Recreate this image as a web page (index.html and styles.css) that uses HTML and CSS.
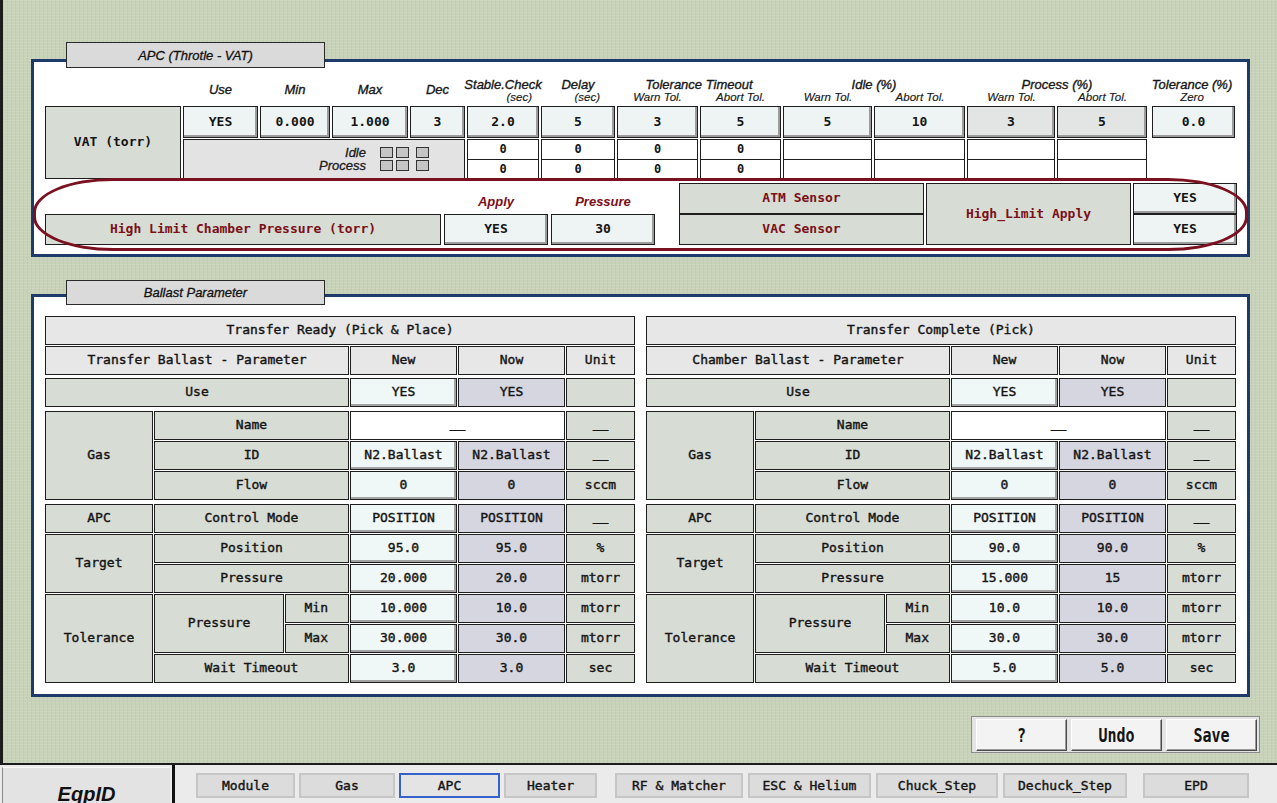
FILE: index.html
```html
<!DOCTYPE html>
<html>
<head>
<meta charset="utf-8">
<title>APC</title>
<link rel="stylesheet" href="styles.css">
</head>
<body>
<div class="main">
  <section class="panel panel-apc">
    <div class="tab">APC (Throtle - VAT)</div>
    <div class="apc-grid">
      <div class="hd"></div>
      <div class="hd single"><span class="hm">Use</span></div>
      <div class="hd single"><span class="hm">Min</span></div>
      <div class="hd single"><span class="hm">Max</span></div>
      <div class="hd single"><span class="hm">Dec</span></div>
      <div class="hd"><span class="hm">Stable.Check</span><span class="hs sec1">(sec)</span></div>
      <div class="hd"><span class="hm">Delay</span><span class="hs sec2">(sec)</span></div>
      <div class="hd span2"><span class="hm">Tolerance Timeout</span><div class="hs2"><span class="hs">Warn Tol.</span><span class="hs">Abort Tol.</span></div></div>
      <div class="hd span2"><span class="hm">Idle (%)</span><div class="hs2"><span class="hs">Warn Tol.</span><span class="hs">Abort Tol.</span></div></div>
      <div class="hd span2"><span class="hm">Process (%)</span><div class="hs2"><span class="hs">Warn Tol.</span><span class="hs">Abort Tol.</span></div></div>
      <div class="hd"><span class="hm">Tolerance (%)</span><span class="hs">Zero</span></div>

      <div class="lbl vat">VAT (torr)</div>
      <div class="val">YES</div>
      <div class="val">0.000</div>
      <div class="val">1.000</div>
      <div class="val">3</div>
      <div class="val">2.0</div>
      <div class="val">5</div>
      <div class="val">3</div>
      <div class="val">5</div>
      <div class="val">5</div>
      <div class="val">10</div>
      <div class="val proc">3</div>
      <div class="val proc">5</div>
      <div class="val zero">0.0</div>

      <div class="idlebox">
        <div class="idletext"><span>Idle</span><span>Process</span></div>
        <div class="squares">
          <div class="sqrow"><i class="sq"></i><i class="sq"></i><i class="sq far"></i></div>
          <div class="sqrow"><i class="sq"></i><i class="sq"></i><i class="sq far"></i></div>
        </div>
      </div>
      <div class="stack"><div>0</div><div>0</div></div>
      <div class="stack"><div>0</div><div>0</div></div>
      <div class="stack"><div>0</div><div>0</div></div>
      <div class="stack"><div>0</div><div>0</div></div>
      <div class="stack"><div></div><div></div></div>
      <div class="stack"><div></div><div></div></div>
      <div class="stack"><div></div><div></div></div>
      <div class="stack"><div></div><div></div></div>
    </div>

    <div class="hl-row">
      <div class="hl-left">
        <div></div>
        <div class="hl-cap">Apply</div>
        <div class="hl-cap">Pressure</div>
        <div class="lbl red">High Limit Chamber Pressure (torr)</div>
        <div class="val">YES</div>
        <div class="val">30</div>
      </div>
      <div class="hl-right">
        <div class="lbl red atm">ATM Sensor</div>
        <div class="lbl red vac">VAC Sensor</div>
        <div class="lbl red hla">High_Limit Apply</div>
        <div class="val y1">YES</div>
        <div class="val y2">YES</div>
      </div>
    </div>
    <div class="ring"></div>
  </section>

  <section class="panel panel-ballast">
    <div class="tab">Ballast Parameter</div>

    <div class="btable">
      <div class="bgrp">
        <div class="c h s6">Transfer Ready (Pick &amp; Place)</div>
        <div class="c h s3">Transfer Ballast - Parameter</div>
        <div class="c h">New</div>
        <div class="c h">Now</div>
        <div class="c h">Unit</div>
      </div>
      <div class="bgrp g2">
        <div class="c s3">Use</div>
        <div class="c new">YES</div>
        <div class="c now">YES</div>
        <div class="c"></div>
      </div>
      <div class="bgrp g3">
        <div class="c r3">Gas</div>
        <div class="c s2">Name</div>
        <div class="c wht s2 us">__</div>
        <div class="c us">__</div>
        <div class="c s2">ID</div>
        <div class="c new">N2.Ballast</div>
        <div class="c now">N2.Ballast</div>
        <div class="c us">__</div>
        <div class="c s2">Flow</div>
        <div class="c new">0</div>
        <div class="c now">0</div>
        <div class="c">sccm</div>
      </div>
      <div class="bgrp g4">
        <div class="c">APC</div>
        <div class="c s2">Control Mode</div>
        <div class="c new">POSITION</div>
        <div class="c now">POSITION</div>
        <div class="c us">__</div>
        <div class="c r2">Target</div>
        <div class="c s2">Position</div>
        <div class="c new">95.0</div>
        <div class="c now">95.0</div>
        <div class="c">%</div>
        <div class="c s2">Pressure</div>
        <div class="c new">20.000</div>
        <div class="c now">20.0</div>
        <div class="c">mtorr</div>
        <div class="c r3">Tolerance</div>
        <div class="c r2">Pressure</div>
        <div class="c mm">Min</div>
        <div class="c new">10.000</div>
        <div class="c now">10.0</div>
        <div class="c">mtorr</div>
        <div class="c mm">Max</div>
        <div class="c new">30.000</div>
        <div class="c now">30.0</div>
        <div class="c">mtorr</div>
        <div class="c s2">Wait Timeout</div>
        <div class="c new">3.0</div>
        <div class="c now">3.0</div>
        <div class="c">sec</div>
      </div>
    </div>

    <div class="btable">
      <div class="bgrp">
        <div class="c h s6">Transfer Complete (Pick)</div>
        <div class="c h s3">Chamber Ballast - Parameter</div>
        <div class="c h">New</div>
        <div class="c h">Now</div>
        <div class="c h">Unit</div>
      </div>
      <div class="bgrp g2">
        <div class="c s3">Use</div>
        <div class="c new">YES</div>
        <div class="c now">YES</div>
        <div class="c"></div>
      </div>
      <div class="bgrp g3">
        <div class="c r3">Gas</div>
        <div class="c s2">Name</div>
        <div class="c wht s2 us">__</div>
        <div class="c us">__</div>
        <div class="c s2">ID</div>
        <div class="c new">N2.Ballast</div>
        <div class="c now">N2.Ballast</div>
        <div class="c us">__</div>
        <div class="c s2">Flow</div>
        <div class="c new">0</div>
        <div class="c now">0</div>
        <div class="c">sccm</div>
      </div>
      <div class="bgrp g4">
        <div class="c">APC</div>
        <div class="c s2">Control Mode</div>
        <div class="c new">POSITION</div>
        <div class="c now">POSITION</div>
        <div class="c us">__</div>
        <div class="c r2">Target</div>
        <div class="c s2">Position</div>
        <div class="c new">90.0</div>
        <div class="c now">90.0</div>
        <div class="c">%</div>
        <div class="c s2">Pressure</div>
        <div class="c new">15.000</div>
        <div class="c now">15</div>
        <div class="c">mtorr</div>
        <div class="c r3">Tolerance</div>
        <div class="c r2">Pressure</div>
        <div class="c mm">Min</div>
        <div class="c new">10.0</div>
        <div class="c now">10.0</div>
        <div class="c">mtorr</div>
        <div class="c mm">Max</div>
        <div class="c new">30.0</div>
        <div class="c now">30.0</div>
        <div class="c">mtorr</div>
        <div class="c s2">Wait Timeout</div>
        <div class="c new">5.0</div>
        <div class="c now">5.0</div>
        <div class="c">sec</div>
      </div>
    </div>
  </section>

  <div class="actions">
    <button class="abtn"><span>?</span></button>
    <button class="abtn"><span>Undo</span></button>
    <button class="abtn"><span>Save</span></button>
  </div>
</div>

<nav class="navbar">
  <div class="eqp">EqpID</div>
  <div class="sep"></div>
  <div class="tabs">
    <div class="nb w-module">Module</div>
    <div class="nb w-gas">Gas</div>
    <div class="nb on w-apc">APC</div>
    <div class="nb w-heater">Heater</div>
    <div class="nb w-rf">RF &amp; Matcher</div>
    <div class="nb w-esc">ESC &amp; Helium</div>
    <div class="nb w-chuck">Chuck_Step</div>
    <div class="nb w-dechuck">Dechuck_Step</div>
    <div class="nb w-epd">EPD</div>
  </div>
</nav>
</body>
</html>
```

FILE: styles.css
```css
* { box-sizing: border-box; }
html, body { margin: 0; padding: 0; }
body {
  width: 1277px;
  height: 803px;
  overflow: hidden;
  font-family: "DejaVu Sans Mono", "Liberation Mono", monospace;
  font-size: 13px;
  color: #141414;
  background: #ebebeb;
}

.main {
  height: 765px;
  display: flex;
  flex-direction: column;
  align-items: flex-start;
  border-left: 3px solid #1c1c1c;
  border-bottom: 2px solid #1c1c1c;
  background-color: #c8d2b9;
  background-image: repeating-linear-gradient(0deg, rgba(255,255,255,0.08) 0 1px, rgba(0,0,0,0) 1px 3px),
                    repeating-linear-gradient(90deg, rgba(0,0,0,0.03) 0 1px, rgba(0,0,0,0) 1px 4px);
}

.panel {
  position: relative;
  margin-left: 28px;
  width: 1219px;
  border: 3px solid #1d3a6b;
  background: #fff;
}
.panel-apc { margin-top: 59px; height: 198px; padding: 14px 11px 0; }
.panel-ballast { margin-top: 37px; height: 403px; padding: 19px 11px 0; display: flex; gap: 11px; }

.tab {
  position: absolute;
  left: 32px;
  width: 259px;
  background: #dadada;
  border: 1px solid #2a2a2a;
  font-family: "Liberation Sans", Arial, sans-serif;
  font-style: italic;
  font-size: 13px;
  color: #111;
  -webkit-text-stroke: 0.3px #111;
  display: flex;
  align-items: center;
  justify-content: center;
}
.panel-apc .tab { top: -20px; height: 26px; }
.panel-ballast .tab { top: -17px; height: 25px; }

/* APC grid */
.apc-grid {
  display: grid;
  grid-template-columns: 136px 75px 70px 76px 55px 72px 74px 81px 81px 89px 91px 88px 90px 86px;
  grid-template-rows: 29px 32px 40px;
  column-gap: 2px;
  row-gap: 1px;
}
.hd {
  display: flex;
  flex-direction: column;
  justify-content: flex-end;
  align-items: center;
  padding-bottom: 2px;
  font-family: "Liberation Sans", Arial, sans-serif;
  font-style: italic;
  color: #161616;
}
.hd.single { padding-bottom: 8px; }
.hd.span2 { grid-column: span 2; align-items: stretch; }
.hd.span2 .hm { text-align: center; }
.hm { font-size: 13px; line-height: 14px; white-space: nowrap; -webkit-text-stroke: 0.35px #161616; }
.hs { font-size: 11.5px; line-height: 11px; white-space: nowrap; -webkit-text-stroke: 0.15px #161616; }
.sec1 { align-self: flex-end; padding-right: 7px; }
.sec2 { align-self: flex-end; padding-right: 15px; }
.hs2 { display: grid; grid-template-columns: 1fr 1fr; gap: 2px; text-align: center; }

.val {
  display: flex;
  align-items: center;
  justify-content: center;
  background: #eef4f4;
  border: 1px solid #1e1e1e;
  box-shadow: inset -2px -2px 0 #9c9c9c;
  font-weight: bold;
  padding-bottom: 2px;
}
.val.proc { background: #e3e5e5; }
.val.zero { margin-left: 3px; }

.lbl {
  display: flex;
  align-items: center;
  justify-content: center;
  background: #d7dcd4;
  border: 1px solid #1e1e1e;
  font-weight: bold;
  white-space: nowrap;
  padding-bottom: 2px;
}
.lbl.red { color: #7a1018; }
.vat { grid-row: 2 / span 2; }

.idlebox {
  grid-column: 2 / span 4;
  background: #e3e3e3;
  border: 1px solid #1e1e1e;
  display: flex;
  justify-content: flex-end;
  align-items: center;
  padding-right: 35px;
  gap: 14px;
}
.idletext {
  display: flex;
  flex-direction: column;
  align-items: flex-end;
  font-family: "Liberation Sans", Arial, sans-serif;
  font-style: italic;
  font-size: 13px;
  line-height: 13px;
  color: #1a1a1a;
  -webkit-text-stroke: 0.3px #1a1a1a;
}
.squares { display: flex; flex-direction: column; gap: 2px; }
.sqrow { display: flex; gap: 3px; }
.sq { display: block; width: 13px; height: 11px; background: #c5c5c5; border: 1px solid #333; }
.sq.far { margin-left: 4px; }

.stack {
  display: flex;
  flex-direction: column;
  border: 1px solid #1e1e1e;
  background: #fff;
}
.stack > div {
  flex: 1;
  display: flex;
  align-items: center;
  justify-content: center;
  font-weight: bold;
  font-size: 12px;
}
.stack > div + div { border-top: 1px solid #1e1e1e; }

/* High limit row */
.hl-row { display: flex; margin-top: 4px; }
.hl-left {
  display: grid;
  grid-template-columns: 396px 104px 104px;
  grid-template-rows: 31px 31px;
  column-gap: 3px;
}
.hl-right {
  display: grid;
  grid-template-columns: 245px 205px 104px;
  grid-template-rows: 31px 31px;
  column-gap: 2px;
  margin-left: 24px;
}
.hl-cap {
  display: flex;
  align-items: flex-end;
  justify-content: center;
  padding-bottom: 5px;
  font-family: "Liberation Sans", Arial, sans-serif;
  font-style: italic;
  font-weight: bold;
  font-size: 13px;
  color: #7a1018;
}
.atm { grid-column: 1; grid-row: 1; }
.vac { grid-column: 1; grid-row: 2; }
.hla { grid-column: 2; grid-row: 1 / span 2; }
.y1 { grid-column: 3; grid-row: 1; }
.y2 { grid-column: 3; grid-row: 2; }

.ring {
  position: absolute;
  left: -1px;
  top: 116px;
  width: 1215px;
  height: 73px;
  border: 3px solid #7b1020;
  border-radius: 80px / 34px;
  pointer-events: none;
}

/* Ballast tables */
.btable { width: 590px; display: flex; flex-direction: column; }
.bgrp {
  display: grid;
  grid-template-columns: 108px 130px 64px 107px 107px 69px;
  grid-auto-rows: 29px;
  gap: 1px;
}
.g2 { margin-top: 3px; }
.g3 { margin-top: 4px; }
.g4 { margin-top: 4px; }
.c {
  display: flex;
  align-items: center;
  justify-content: center;
  border: 1px solid #1e1e1e;
  background: #d7dcd4;
  white-space: nowrap;
  padding-bottom: 2px;
  -webkit-text-stroke: 0.4px #141414;
}
.c.h { background: #e7e7e7; }
.c.new { background: #f0f7f7; box-shadow: inset -2px -2px 0 #a3a3a3; }
.c.now { background: #d6d6e0; }
.c.wht { background: #fff; }
.c.us { align-items: flex-end; padding-bottom: 8px; }
.c.mm { justify-content: flex-end; padding-right: 20px; }
.s2 { grid-column: span 2; }
.s3 { grid-column: span 3; }
.s6 { grid-column: span 6; }
.r2 { grid-row: span 2; }
.r3 { grid-row: span 3; }

/* actions */
.actions {
  align-self: flex-end;
  margin: 19px 17px 0 0;
  width: 289px;
  height: 37px;
  border: 1px solid #8a8a8a;
  background: #e4e4e4;
  display: flex;
  gap: 4px;
  padding: 2px 2px 1px 4px;
}
.abtn {
  flex: 1;
  margin: 0;
  padding: 0;
  background: #f3f3f3;
  border: 1px solid;
  border-color: #ffffff #4a4a4a #4a4a4a #ffffff;
  box-shadow: inset -1px -1px 0 #9a9a9a;
  font-family: "DejaVu Sans Mono", "Liberation Mono", monospace;
  font-weight: bold;
  font-size: 15px;
  color: #141414;
  display: flex;
  align-items: center;
  justify-content: center;
}
.abtn span { display: inline-block; transform: scaleY(1.35); }

/* navbar */
.navbar { height: 38px; display: flex; background: #ebebeb; }
.eqp {
  margin: 2px 0 0 2px;
  width: 168px;
  height: 36px;
  background: #e3e3e3;
  border-left: 1px solid #8a8a8a;
  border-top: 1px solid #f8f8f8;
  font-family: "Liberation Sans", Arial, sans-serif;
  font-style: italic;
  font-weight: bold;
  font-size: 20px;
  line-height: 20px;
  padding-top: 16px;
  text-align: center;
  color: #111;
}
.sep { width: 3px; margin-left: 2px; background: #111; }
.tabs { display: flex; gap: 4px; margin: 8px 0 0 21px; height: 25px; }
.nb {
  border: 2px solid #c6c6c6;
  background: #dcdcdc;
  display: flex;
  align-items: center;
  justify-content: center;
  white-space: nowrap;
  padding-bottom: 1px;
  -webkit-text-stroke: 0.4px #141414;
}
.nb.on { border-color: #3563c9; background: #e4e4e4; }
.w-module { width: 99px; }
.w-gas { width: 96px; }
.w-apc { width: 101px; }
.w-heater { width: 93px; }
.w-rf { width: 128px; margin-left: 14px; }
.w-esc { width: 123px; margin-left: 1px; }
.w-chuck { width: 122px; margin-left: 1px; }
.w-dechuck { width: 124px; margin-left: 1px; }
.w-epd { width: 106px; margin-left: 12px; }
```
